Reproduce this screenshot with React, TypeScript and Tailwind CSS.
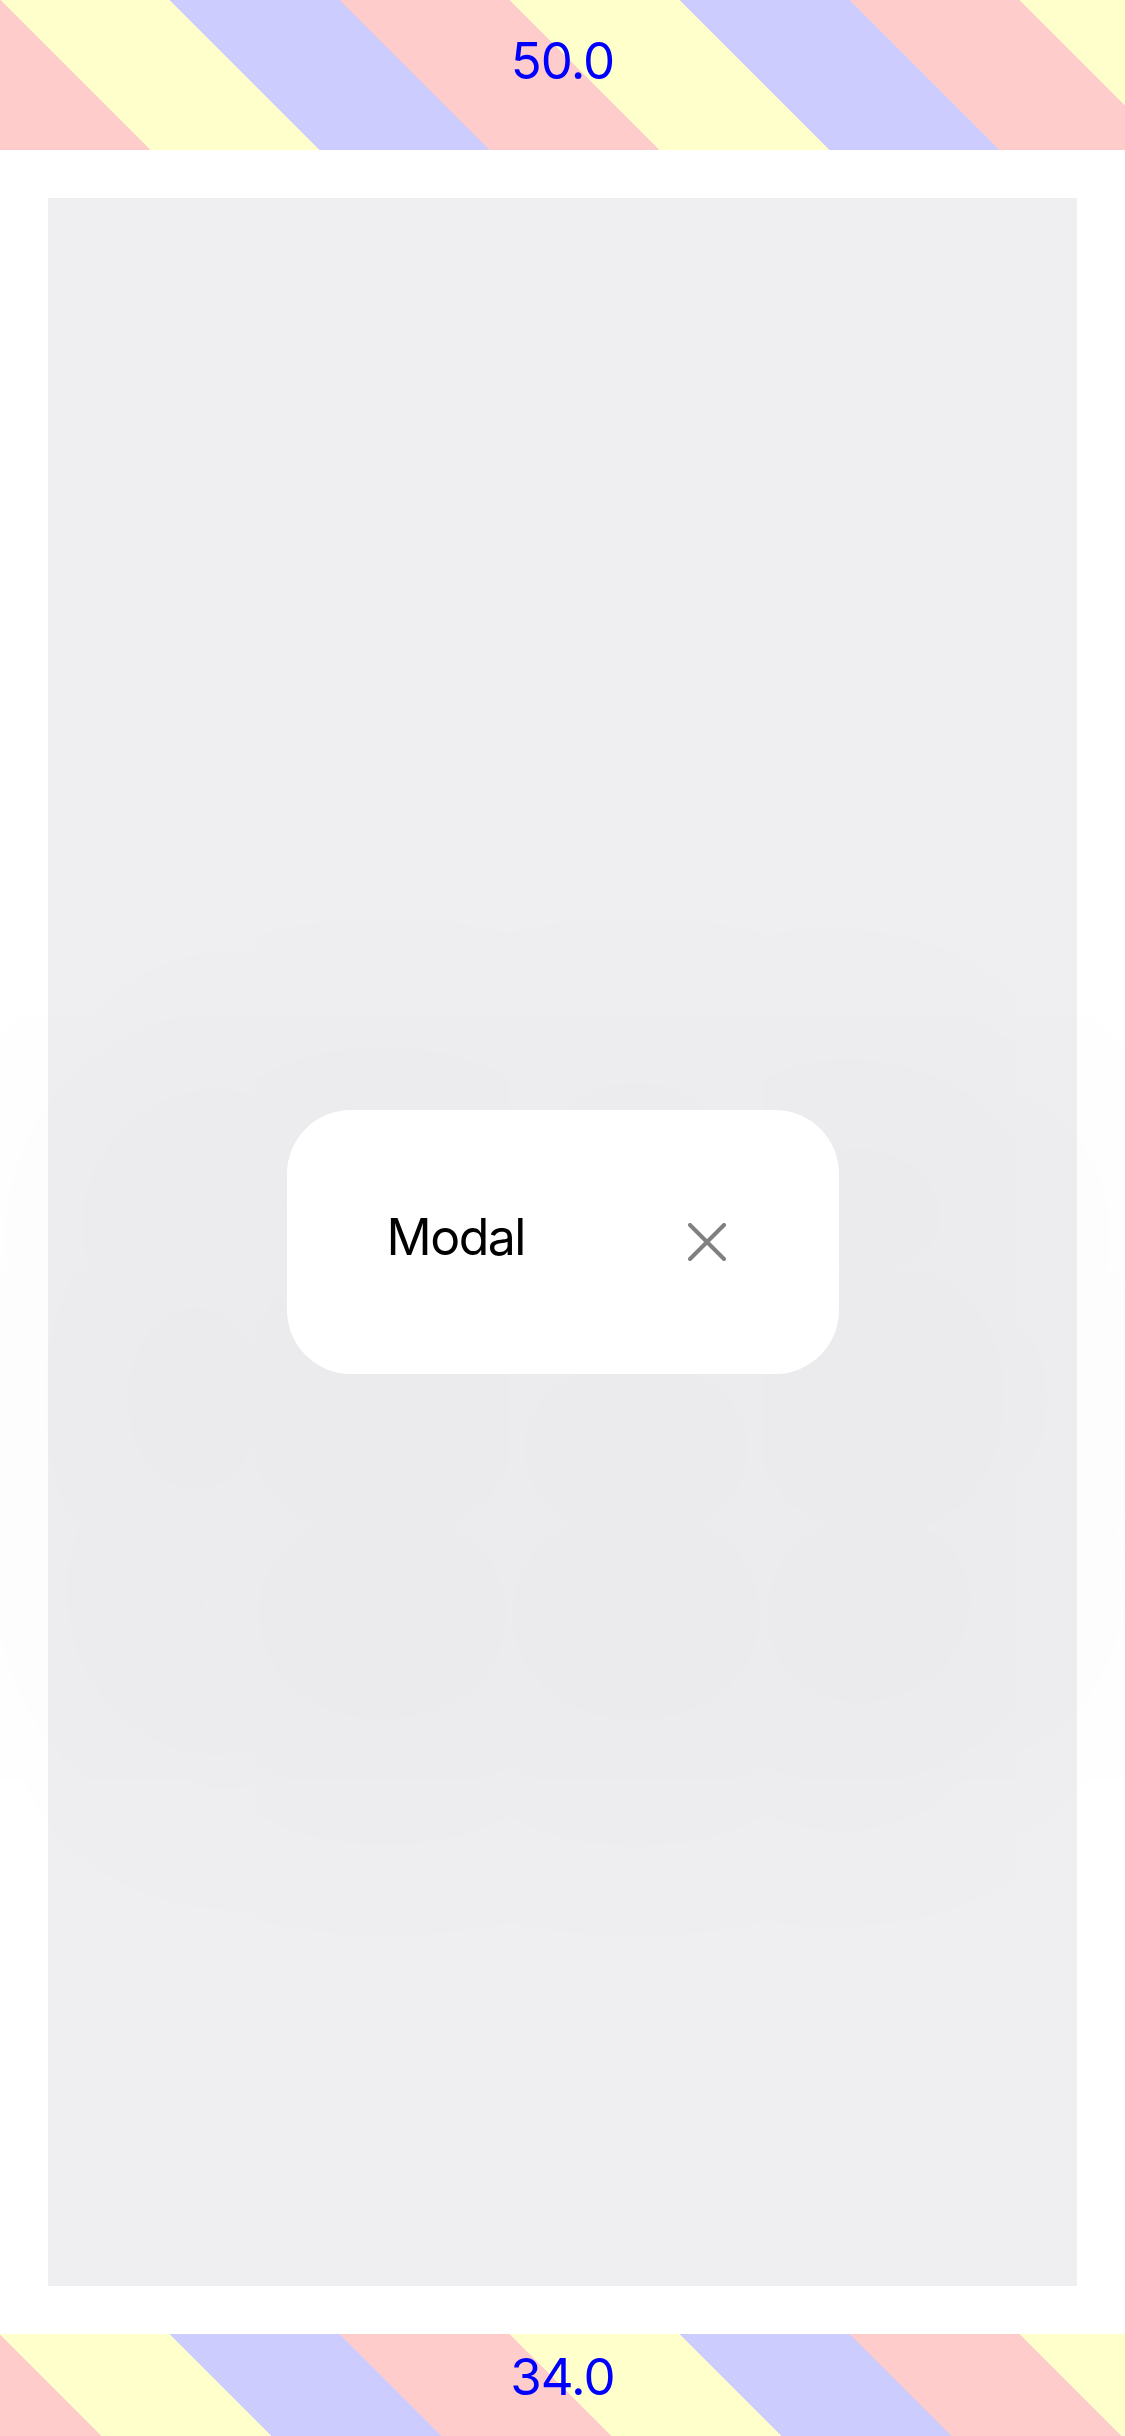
export default function App() {
  return (
    <div className="flex h-[2436px] w-full flex-col bg-white font-['Inter',sans-serif]">
      <div className="flex h-[150px] shrink-0 justify-center bg-[repeating-linear-gradient(45deg,#ffcccc_0px,#ffcccc_106.07px,#ffffcc_106.07px,#ffffcc_226.27px,#ccccff_226.27px,#ccccff_346.48px,#ffcccc_346.48px,#ffcccc_360.62px)] pt-[35px]">
        <span className="text-[51px] leading-none tracking-[-1px] text-[#0000ff]">50.0</span>
      </div>

      <div className="flex flex-1 p-[48px]">
        <div className="flex flex-1 items-center justify-center bg-[#efeff2]">
          <div className="flex h-[264px] w-[552px] items-center justify-between rounded-[64px] bg-white pl-[100px] pr-[113px] shadow-[0_180px_600px_280px_rgba(0,0,0,0.02)]">
            <span className="mb-[10px] text-[50px] leading-none tracking-[-1.5px] text-black">Modal</span>
            <svg width="38" height="38" viewBox="0 0 38 38">
              <path d="M2 2L36 36M36 2L2 36" stroke="#808080" strokeWidth="4" strokeLinecap="round" fill="none" />
            </svg>
          </div>
        </div>
      </div>

      <div className="flex h-[102px] shrink-0 justify-center bg-[repeating-linear-gradient(45deg,#ffcccc_0px,#ffcccc_72.12px,#ffffcc_72.12px,#ffffcc_192.33px,#ccccff_192.33px,#ccccff_312.53px,#ffcccc_312.53px,#ffcccc_360.62px)] pt-[17px]">
        <span className="text-[51px] leading-none tracking-[-1px] text-[#0000ff]">34.0</span>
      </div>
    </div>
  );
}
